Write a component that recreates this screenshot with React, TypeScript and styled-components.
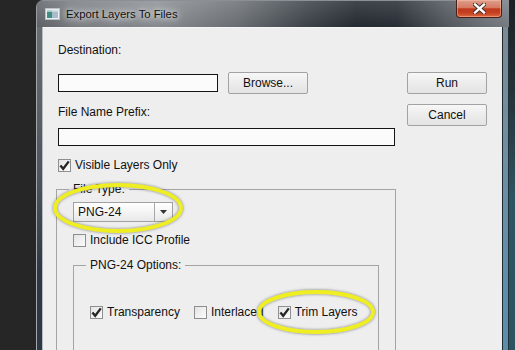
import styled, { createGlobalStyle } from 'styled-components';

const GlobalStyle = createGlobalStyle`
  html, body {
    margin: 0;
    padding: 0;
  }
  body {
    width: 515px;
    height: 350px;
    overflow: hidden;
    background:
      linear-gradient(to bottom, #1d2126 0px, #243238 90px, #2d5561 200px, #2c5360 100%) right top / 6px 100% no-repeat,
      #262626;
    font-family: "Liberation Sans", Arial, sans-serif;
  }
`

const Page = styled.div`
  position: relative;
  width: 515px;
  height: 350px;
  overflow: hidden;
  display: flex;
`

const Window = styled.div`
  margin-left: 36px;
  width: 473px;
  height: 350px;
  display: flex;
  flex-direction: column;
  border-top-left-radius: 7px;
  overflow: hidden;
`

const TitleBar = styled.div`
  height: 27px;
  flex-shrink: 0;
  display: flex;
  align-items: center;
  padding-left: 8px;
  box-sizing: border-box;
  border-top: 1px solid #8b9096;
  border-left: 1px solid #9a9ea3;
  background:
    linear-gradient(to bottom, rgba(255, 255, 255, 0.12), rgba(0, 0, 0, 0.05)),
    linear-gradient(to right, #63676c 0px, #7d8186 40px, #8e9296 120px, #6e7378 200px, #3f454b 270px, #262c33 320px, #2a3037 360px, #555b61 410px, #70767c 450px, #7b8187 473px);
`

const Title = styled.span`
  margin-left: 6px;
  font-size: 11.3px;
  color: #111;
  text-shadow: 0 0 8px rgba(255, 255, 255, 0.95), 0 0 14px rgba(255, 255, 255, 0.7), 0 0 4px rgba(255, 255, 255, 0.6);
`

const CloseButton = styled.div`
  margin-left: auto;
  margin-right: 7px;
  align-self: flex-start;
  margin-top: -1px;
  width: 46px;
  height: 18px;
  box-sizing: border-box;
  border: 1px solid #4a1f18;
  border-top: none;
  border-radius: 0 0 4px 4px;
  display: flex;
  align-items: center;
  justify-content: center;
  box-shadow: inset 0 0 0 1px rgba(255, 200, 180, 0.45);
  background: linear-gradient(to bottom, #dea08e 0%, #d67a62 45%, #bf3a1e 52%, #c4401f 75%, #dc6a40 100%);
`

const Body = styled.div`
  flex: 1;
  display: flex;
`

const SideFrame = styled.div<{ $side: 'left' | 'right' }>`
  width: 7px;
  flex-shrink: 0;
  box-sizing: border-box;
  ${({ $side }) =>
    $side === 'left'
      ? `
    border-left: 1px solid #a3a8ad;
    border-right: 1px solid #b8bcc0;
    background: linear-gradient(to bottom, #686d72 0%, #4e555c 40%, #2c3944 65%, #2b3945 100%);
  `
      : `
    border-left: 1px solid #1e2a30;
    border-right: 1px solid #1f3038;
    background: linear-gradient(to bottom, #7d8a94 0%, #6f8fa2 35%, #5f8eab 70%, #5d8dab 100%);
  `}
`

const Client = styled.div`
  flex: 1;
  background: #eeeeee;
  border-top: 1px solid #f6f6f6;
  padding: 15px 0 0 15px;
  display: flex;
  gap: 11px;
  font-size: 12px;
  color: #111;
`

const LeftColumn = styled.div`
  width: 338px;
  display: flex;
  flex-direction: column;
`

const RightColumn = styled.div`
  padding-top: 29px;
  display: flex;
  flex-direction: column;
  gap: 10px;
`

const Label = styled.div<{ $top?: number }>`
  line-height: 14px;
  height: 14px;
  margin-top: ${({ $top }) => $top ?? 0}px;
`

const Row = styled.div<{ $top?: number }>`
  display: flex;
  align-items: center;
  gap: 10px;
  margin-top: ${({ $top }) => $top ?? 0}px;
`

const TextInput = styled.div<{ $width: number; $top?: number }>`
  width: ${({ $width }) => $width}px;
  height: 18px;
  box-sizing: border-box;
  border: 1px solid #141414;
  background: #fbfbfb;
  margin-top: ${({ $top }) => $top ?? 0}px;
`

const Button = styled.div`
  width: 80px;
  height: 22px;
  box-sizing: border-box;
  border: 1px solid #a2a2a2;
  border-radius: 2px;
  background: linear-gradient(to bottom, #f7f7f7, #ececec 50%, #e4e4e4);
  display: flex;
  align-items: center;
  justify-content: center;
  line-height: 14px;
`

const CheckRow = styled.div<{ $top?: number }>`
  display: flex;
  align-items: center;
  height: 14px;
  line-height: 14px;
  margin-top: ${({ $top }) => $top ?? 0}px;
`

const Box = styled.span`
  width: 13px;
  height: 13px;
  box-sizing: border-box;
  border: 1px solid #8e8f8f;
  background: linear-gradient(135deg, #e4e4e4, #fbfbfb);
  display: flex;
  align-items: center;
  justify-content: center;
  margin-right: 4px;
  flex-shrink: 0;
`

const OptionRow = styled.div`
  display: flex;
  gap: 14px;
`

const Group = styled.fieldset<{ $width: number; $top: number; $padTop: number; $shift?: number }>`
  margin: ${({ $top }) => $top}px 0 0 ${({ $shift }) => $shift ?? 0}px;
  width: ${({ $width }) => $width}px;
  min-width: 0;
  box-sizing: border-box;
  border: 1px solid #a4a4a4;
  padding: ${({ $padTop }) => $padTop}px 0 40px 16px;
  display: flex;
  flex-direction: column;
  align-items: flex-start;
`

const Legend = styled.legend`
  padding: 0 4px;
  margin-left: -4px;
  line-height: 14px;
  font-size: 12px;
`

const Select = styled.div`
  width: 100px;
  height: 20px;
  box-sizing: border-box;
  border: 1px solid #a0a0a0;
  background: linear-gradient(to bottom, #ffffff, #f2f2f2 60%, #e8e8e8);
  display: flex;
  align-items: center;
`

const SelectValue = styled.span`
  flex: 1;
  padding-left: 4px;
  line-height: 14px;
`

const SelectArrow = styled.span`
  width: 17px;
  height: 100%;
  border-left: 1px solid #a8a8a8;
  display: flex;
  align-items: center;
  justify-content: center;
`

const Spaced = styled.div<{ $top: number }>`
  margin-top: ${({ $top }) => $top}px;
`

const Annotations = styled.svg`
  position: absolute;
  left: 0;
  top: 0;
  pointer-events: none;
`

const AppIcon = () => (
  <svg width="15" height="12" viewBox="0 0 15 12">
    <rect x="0.5" y="0.5" width="14" height="11" fill="#e9eef1" stroke="#b9c2c8" />
    <rect x="2" y="2.5" width="5" height="7.5" fill="#3f8f80" />
    <rect x="7" y="2.5" width="6" height="7.5" fill="#a9bccb" />
    <rect x="2" y="2.5" width="11" height="1.2" fill="#d8e2e8" />
  </svg>
)

const CloseGlyph = () => (
  <svg width="13" height="11" viewBox="0 0 13 11">
    <path d="M2 1.5 L11 9.5 M11 1.5 L2 9.5" stroke="#3a2522" strokeWidth="4.2" strokeLinecap="square" />
    <path d="M2 1.5 L11 9.5 M11 1.5 L2 9.5" stroke="#ffffff" strokeWidth="2.4" strokeLinecap="square" />
  </svg>
)

const Tick = () => (
  <svg width="11" height="11" viewBox="0 0 11 11">
    <path d="M1.4 5.4 L4.2 8.8 L9.8 1.4" fill="none" stroke="#262626" strokeWidth="2.3" />
  </svg>
)

const Check = ({ checked, label, top }: { checked?: boolean; label: string; top?: number }) => (
  <CheckRow $top={top}>
    <Box>{checked && <Tick />}</Box>
    {label}
  </CheckRow>
)

export default function App() {
  return (
    <>
      <GlobalStyle />
      <Page>
        <Window>
          <TitleBar>
            <AppIcon />
            <Title>Export Layers To Files</Title>
            <CloseButton>
              <CloseGlyph />
            </CloseButton>
          </TitleBar>
          <Body>
            <SideFrame $side="left" />
            <Client>
              <LeftColumn>
                <Label>Destination:</Label>
                <Row $top={15}>
                  <TextInput $width={160} />
                  <Button>Browse...</Button>
                </Row>
                <Label $top={11}>File Name Prefix:</Label>
                <TextInput $width={337} $top={9} />
                <Check checked label="Visible Layers Only" top={12} />
                <Group $width={340} $top={10} $padTop={6} $shift={-2}>
                  <Legend>File Type:</Legend>
                  <Select>
                    <SelectValue>PNG-24</SelectValue>
                    <SelectArrow>
                      <svg width="7" height="4" viewBox="0 0 7 4">
                        <path d="M0 0 L7 0 L3.5 4 Z" fill="#333" />
                      </svg>
                    </SelectArrow>
                  </Select>
                  <Spaced $top={11}>
                    <Check label="Include ICC Profile" />
                  </Spaced>
                  <Group $width={306} $top={11} $padTop={33}>
                    <Legend>PNG-24 Options:</Legend>
                    <OptionRow>
                      <Check checked label="Transparency" />
                      <Check label="Interlaced" />
                      <Check checked label="Trim Layers" />
                    </OptionRow>
                  </Group>
                </Group>
              </LeftColumn>
              <RightColumn>
                <Button>Run</Button>
                <Button>Cancel</Button>
              </RightColumn>
            </Client>
            <SideFrame $side="right" />
          </Body>
        </Window>
        <Annotations width="515" height="350" viewBox="0 0 515 350">
          <defs>
            <filter id="glow" x="-20%" y="-30%" width="140%" height="160%">
              <feDropShadow dx="0" dy="0" stdDeviation="1.6" floodColor="#555" floodOpacity="0.8" />
            </filter>
          </defs>
          <ellipse cx="118" cy="208" rx="63" ry="23" fill="none" stroke="#eeee22" strokeWidth="3.8" filter="url(#glow)" />
          <ellipse cx="316" cy="312" rx="57" ry="20" fill="none" stroke="#eeee22" strokeWidth="3.8" filter="url(#glow)" />
        </Annotations>
      </Page>
    </>
  )
}
